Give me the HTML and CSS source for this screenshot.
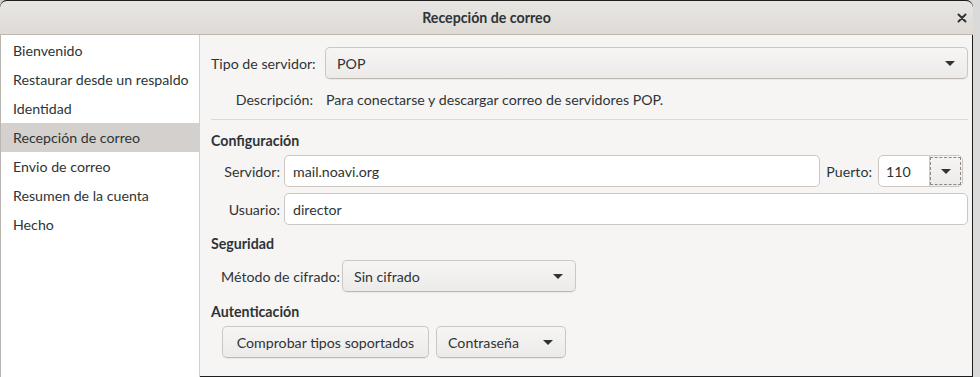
FILE: index.html
```html
<!DOCTYPE html>
<html lang="es">
<head>
<meta charset="utf-8">
<title>Recepción de correo</title>
<link rel="stylesheet" href="styles.css">
</head>
<body>
<div class="window">
  <header class="titlebar">
    <span class="title">Recepción de correo</span>
    <span class="close" aria-label="Cerrar">
      <svg width="10" height="10" viewBox="0 0 10 10"><path d="M1.5 1.5 L8.5 8.5 M8.5 1.5 L1.5 8.5" stroke="#2e3436" stroke-width="2" stroke-linecap="round"/></svg>
    </span>
  </header>
  <div class="content">
    <nav class="sidebar">
      <div class="item">Bienvenido</div>
      <div class="item">Restaurar desde un respaldo</div>
      <div class="item">Identidad</div>
      <div class="item selected">Recepción de correo</div>
      <div class="item">Envio de correo</div>
      <div class="item">Resumen de la cuenta</div>
      <div class="item">Hecho</div>
    </nav>
    <main class="main">
      <div class="toprow">
        <span class="toplabel">Tipo de servidor:</span>
        <div class="combo wide"><span>POP</span><span class="arrow"></span></div>
      </div>
      <div class="descrow">
        <span class="toplabel right">Descripción:</span>
        <span class="desc">Para conectarse y descargar correo de servidores POP.</span>
      </div>
      <div class="separator"></div>
      <div class="heading">Configuración</div>
      <div class="fieldrow first">
        <span class="flabel">Servidor:</span>
        <div class="entry grow">mail.noavi.org</div>
        <span class="plabel">Puerto:</span>
        <div class="spin"><span class="spinval">110</span><span class="spinbtn"><span class="arrow"></span></span></div>
      </div>
      <div class="fieldrow second">
        <span class="flabel">Usuario:</span>
        <div class="entry grow">director</div>
      </div>
      <div class="heading sec">Seguridad</div>
      <div class="cifrow">
        <span class="clabel">Método de cifrado:</span>
        <div class="combo cif"><span>Sin cifrado</span><span class="arrow"></span></div>
      </div>
      <div class="heading auth">Autenticación</div>
      <div class="authrow">
        <div class="button check">Comprobar tipos soportados</div>
        <div class="combo pass"><span>Contraseña</span><span class="arrow"></span></div>
      </div>
    </main>
  </div>
</div>
</body>
</html>
```

FILE: styles.css
```css
html, body {
  margin: 0;
  padding: 0;
}
body {
  width: 980px;
  height: 377px;
  overflow: hidden;
  background: linear-gradient(to right, #cfcfcf, #dadada);
  font-family: "Lato", "Noto Sans", sans-serif;
  font-size: 14.2px;
  color: #2e3436;
}
.window {
  width: 973px;
  height: 377px;
  display: flex;
  flex-direction: column;
  background: #f6f5f4;
  border-radius: 7px 7px 0 0;
  box-shadow: 0 0 0 1px #1e1e1e inset;
  overflow: hidden;
}
.titlebar {
  flex: none;
  display: flex;
  align-items: center;
  justify-content: center;
  position: relative;
  background: linear-gradient(to bottom, #e8e6e3, #dedad6);
  border-top: 1px solid #1e1e1e;
  border-bottom: 1px solid #bfb8b1;
  box-sizing: border-box;
  height: 35px;
  border-radius: 7px 7px 0 0;
}
.title {
  font-weight: bold;
  font-size: 14.2px;
  color: #2e3436;
}
.close {
  position: absolute;
  right: 6px;
  top: 12px;
  width: 10px;
  height: 10px;
  display: flex;
}
.content {
  flex: 1;
  display: flex;
}
.sidebar {
  width: 198px;
  flex: none;
  background: #ffffff;
  border-left: 1px solid #b8b4b0;
  border-right: 1px solid #d5d0cc;
  padding-top: 1px;
}
.item {
  height: 29px;
  line-height: 29px;
  padding-left: 12px;
  white-space: nowrap;
}
.item.selected {
  background: #d3d0cd;
}
.main {
  flex: 1;
  padding: 12px 5px 0 11px;
  display: flex;
  flex-direction: column;
}
.toprow {
  display: flex;
  align-items: center;
  height: 32px;
}
.toplabel {
  width: 102px;
  flex: none;
  text-align: right;
  margin-right: 12px;
  white-space: nowrap;
}
.descrow {
  display: flex;
  align-items: center;
  margin-top: 12px;
  height: 18px;
  line-height: 18px;
  white-space: nowrap;
}
.desc {
  margin-left: 1px;
}
.separator {
  margin-top: 10px;
  height: 1px;
  background: #dcd8d4;
}
.heading {
  font-weight: bold;
  line-height: 18px;
  height: 18px;
  margin-top: 12px;
}
.heading.sec {
  margin-top: 10px;
}
.heading.auth {
  margin-top: 11px;
}
.combo {
  box-sizing: border-box;
  height: 32px;
  display: flex;
  align-items: center;
  justify-content: space-between;
  padding: 0 12px 0 11px;
  border: 1px solid #cdc7c2;
  border-bottom-color: #bfb8b1;
  border-radius: 5px;
  background: linear-gradient(to bottom, #f6f5f4, #edebe9);
  box-shadow: 0 1px 1px rgba(0,0,0,0.05);
  white-space: nowrap;
}
.combo.wide {
  flex: 1;
}
.arrow {
  width: 0;
  height: 0;
  border-left: 5px solid transparent;
  border-right: 5px solid transparent;
  border-top: 5px solid #2e3436;
  margin-top: 1px;
}
.fieldrow {
  display: flex;
  align-items: center;
  height: 32px;
}
.fieldrow.first {
  margin-top: 5px;
  padding-right: 5px;
}
.fieldrow.second {
  margin-top: 6px;
}
.flabel {
  width: 59px;
  margin-left: 10px;
  margin-right: 4px;
  text-align: right;
  flex: none;
  white-space: nowrap;
}
.entry {
  box-sizing: border-box;
  height: 32px;
  display: flex;
  align-items: center;
  padding: 0 8px;
  background: #ffffff;
  border: 1px solid #cdc7c2;
  border-radius: 5px;
  white-space: nowrap;
}
.grow {
  flex: 1;
}
.plabel {
  margin: 0 6px;
  white-space: nowrap;
}
.spin {
  box-sizing: border-box;
  width: 85px;
  height: 32px;
  display: flex;
  border: 1px solid #cdc7c2;
  border-radius: 5px;
  background: #ffffff;
  overflow: hidden;
}
.spinval {
  flex: 1;
  display: flex;
  align-items: center;
  padding-left: 7px;
}
.spinbtn {
  width: 32px;
  flex: none;
  display: flex;
  align-items: center;
  justify-content: center;
  background: linear-gradient(to bottom, #f6f5f4, #edebe9);
  border-left: 1px solid #cdc7c2;
  outline: 1px dashed #8c8a88;
  outline-offset: -2px;
}
.cifrow {
  display: flex;
  align-items: center;
  margin-top: 7px;
  height: 32px;
}
.clabel {
  width: 121px;
  margin-left: 10px;
  flex: none;
  white-space: nowrap;
}
.combo.cif {
  width: 234px;
}
.authrow {
  display: flex;
  align-items: center;
  margin-top: 5px;
  padding-left: 11px;
  gap: 7px;
}
.button {
  box-sizing: border-box;
  height: 32px;
  display: flex;
  align-items: center;
  justify-content: center;
  border: 1px solid #cdc7c2;
  border-bottom-color: #bfb8b1;
  border-radius: 5px;
  background: linear-gradient(to bottom, #f6f5f4, #edebe9);
  box-shadow: 0 1px 1px rgba(0,0,0,0.05);
  white-space: nowrap;
}
.button.check {
  width: 207px;
}
.combo.pass {
  width: 130px;
  padding-left: 11px;
  padding-right: 12px;
}
```
